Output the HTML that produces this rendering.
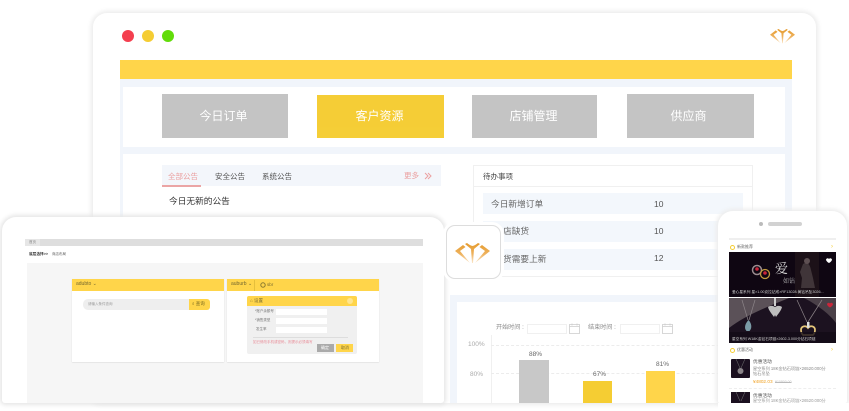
<!DOCTYPE html>
<html lang="zh"><head><meta charset="utf-8"><title>UI</title>
<style>
html,body{margin:0;padding:0;background:#fff}
#p{position:relative;width:849px;height:411px;overflow:hidden;background:#fff;font-family:"Liberation Sans","Noto Sans CJK SC",sans-serif;filter:blur(.3px)}
#p div,#p span.a{position:absolute;box-sizing:border-box}
.t{position:absolute;white-space:nowrap;line-height:1}
.btn{color:#fff;font-size:12px;line-height:44px;text-align:center;opacity:.98}
.row{background:#f3f7fc;left:483px;width:260px;height:21px}
.dot{width:12px;height:12px;border-radius:50%;top:30px}
svg{position:absolute;overflow:visible}
</style></head><body><div id="p">
<svg width="0" height="0"><defs>
<linearGradient id="g" x1="0" y1="0" x2="0" y2="1"><stop offset="0" stop-color="#e59a2c"/><stop offset=".55" stop-color="#eeb25e"/><stop offset="1" stop-color="#fbe6c8"/></linearGradient>
<symbol id="logo" viewBox="0 0 35 21"><path fill="url(#g)" d="M0 8 8 2 10.500 4 5 8 15 20ZM35 8 27 2 24.500 4 30 8 20 20ZM12 0Q15 2.500 17.500 3 20 2.500 23 0L25 1 19 6 18 20H17L16 6 10 1Z"/></symbol>
</defs></svg>

<!-- back window -->
<div style="left:93px;top:13px;width:723px;height:390px;background:#fff;border-radius:14px 14px 6px 6px;box-shadow:0 0 5px 2px #ececec"></div>
<div class="dot" style="left:122px;background:#f43f4f"></div>
<div class="dot" style="left:142px;background:#f5cd33"></div>
<div class="dot" style="left:162px;background:#62dc0a"></div>
<svg style="left:769px;top:29px" width="27" height="15"><use href="#logo" width="27" height="15"/></svg>

<div style="left:120px;top:60px;width:672px;height:19px;background:#ffd54a"></div>
<div style="left:120px;top:79px;width:672px;height:216px;background:#f1f5fb"></div>
<div style="left:123px;top:87px;width:662px;height:60px;background:#fff"></div>
<div style="left:123px;top:154px;width:662px;height:141px;background:#fff"></div>
<div class="btn" style="left:162px;top:94px;width:126px;height:44px;background:#c3c3c3;padding-right:3px">今日订单</div>
<div class="btn" style="left:317px;top:95px;width:127px;height:43px;background:#f5cd33;padding-right:2px;line-height:43px">客户资源</div>
<div class="btn" style="left:472px;top:95px;width:125px;height:43px;background:#c3c3c3;padding-right:2px;line-height:43px">店铺管理</div>
<div class="btn" style="left:627px;top:94px;width:127px;height:44px;background:#c3c3c3;padding-right:4px">供应商</div>

<!-- notices -->
<div style="left:162px;top:165px;width:279px;height:21px;background:#f3f6fb"></div>
<div style="left:162px;top:185px;width:39px;height:2px;background:#eba5a5"></div>
<span class="t" style="left:168px;top:173px;font-size:7.5px;color:#eba0a0">全部公告</span>
<span class="t" style="left:215px;top:173px;font-size:7.5px;color:#555">安全公告</span>
<span class="t" style="left:262px;top:173px;font-size:7.5px;color:#555">系统公告</span>
<span class="t" style="left:404px;top:172px;font-size:7.5px;color:#eba0a0">更多</span>
<svg style="left:424px;top:172px" width="8" height="8" fill="none" stroke="#eba0a0" stroke-width="1"><path d="M1 1 4 4 1 7M4 1 7 4 4 7"/></svg>
<span class="t" style="left:169px;top:197px;font-size:8.7px;color:#333">今日无新的公告</span>

<!-- todo -->
<div style="left:473px;top:165px;width:280px;height:112px;border:1px solid #f0f0f0"></div>
<div style="left:473px;top:186px;width:280px;height:1px;background:#f0f0f0"></div>
<span class="t" style="left:483px;top:173px;font-size:7.5px;color:#444">待办事项</span>
<div class="row" style="top:193px"></div><div class="row" style="top:221px"></div><div class="row" style="top:249px"></div>
<span class="t" style="left:491px;top:200px;font-size:8.7px;color:#666">今日新增订单</span>
<span class="t" style="left:503px;top:227px;font-size:8.7px;color:#666">店缺货</span>
<span class="t" style="left:503px;top:255px;font-size:8.7px;color:#666">货需要上新</span>
<span class="t" style="left:654px;top:200px;font-size:8.500px;color:#555">10</span>
<span class="t" style="left:654px;top:227px;font-size:8.500px;color:#555">10</span>
<span class="t" style="left:654px;top:254px;font-size:8.500px;color:#555">12</span>

<!-- chart -->
<div style="left:450px;top:295px;width:342px;height:108px;background:#f1f5fb"></div>
<div style="left:457px;top:302px;width:328px;height:101px;background:#fff"></div>
<span class="t" style="left:496px;top:325px;font-size:6.100px;color:#888">开始时间 :</span>
<div style="left:527px;top:324px;width:40px;height:10px;border:1px solid #f0f0f0"></div>
<span class="t" style="left:588px;top:325px;font-size:6.100px;color:#888">结束时间 :</span>
<div style="left:620px;top:324px;width:40px;height:10px;border:1px solid #f0f0f0"></div>
<svg style="left:569px;top:323px" width="11" height="11" fill="none" stroke="#ccc" stroke-width=".8"><path d="M.5 1.500h10v9H.5zM.5 3.500h10M3 .5v2M8 .5v2"/></svg>
<svg style="left:662px;top:323px" width="11" height="11" fill="none" stroke="#ccc" stroke-width=".8"><path d="M.5 1.500h10v9H.5zM.5 3.500h10M3 .5v2M8 .5v2"/></svg>
<div style="left:491px;top:335px;width:1px;height:68px;background:#f0f0f0"></div>
<div style="left:491px;top:345px;width:294px;height:0;border-top:1px dashed #ececec"></div>
<div style="left:491px;top:373px;width:294px;height:0;border-top:1px dashed #ececec"></div>
<span class="t" style="left:468px;top:342px;font-size:6.500px;color:#aaa">100%</span>
<span class="t" style="left:470px;top:372px;font-size:6.500px;color:#aaa">80%</span>
<div style="left:519px;top:360px;width:30px;height:43px;background:#c8c8c8"></div>
<div style="left:583px;top:381px;width:29px;height:22px;background:#f5cd33"></div>
<div style="left:646px;top:371px;width:29px;height:32px;background:#ffd54a"></div>
<span class="t" style="left:529px;top:352px;font-size:6.500px;color:#666">88%</span>
<span class="t" style="left:593px;top:372px;font-size:6.500px;color:#666">67%</span>
<span class="t" style="left:656px;top:362px;font-size:6.500px;color:#666">81%</span>

<!-- front window -->
<div style="left:2px;top:217px;width:442px;height:186px;background:#fff;border-radius:14px 14px 3px 3px;box-shadow:0 0 4px 2px #e6e6e6"></div>
<div style="left:25px;top:239px;width:398px;height:7px;background:#dedede"></div>
<div style="left:25px;top:239px;width:15px;height:7px;background:#e6e6e6"></div>
<span class="t" style="left:29px;top:241px;font-size:3.500px;color:#888">首页</span>
<span class="t" style="left:29px;top:253px;font-size:3.700px;color:#333;font-weight:bold">底层选择&gt;&gt;</span>
<span class="t" style="left:52px;top:253px;font-size:3.500px;color:#666">商店布局</span>
<div style="left:27px;top:263px;width:396px;height:140px;background:#f6f6f6"></div>

<div style="left:72px;top:279px;width:152px;height:83px;background:#fff;box-shadow:0 .5px 1px #d8d8d8"></div>
<div style="left:72px;top:279px;width:152px;height:12px;background:#ffd54a"></div>
<span class="t" style="left:76px;top:282px;font-size:5px;color:#776a30">adubto ⌄</span>
<div style="left:83px;top:299px;width:127px;height:11px;background:#eee;border-radius:5px"></div>
<div style="left:189px;top:299px;width:21px;height:11px;background:#ffd54a;border-radius:0 3px 3px 0"></div>
<span class="t" style="left:88px;top:303px;font-size:3.500px;color:#999">请输入条件查询</span>
<span class="t" style="left:192px;top:302px;font-size:4.500px;color:#7a6a20">⌕ 查询</span>

<div style="left:227px;top:279px;width:152px;height:83px;background:#fff;box-shadow:0 .5px 1px #d8d8d8"></div>
<div style="left:227px;top:279px;width:152px;height:12px;background:#ffd54a"></div>
<span class="t" style="left:231px;top:282px;font-size:5px;color:#776a30">auburb ⌄</span>
<svg style="left:260px;top:282px" width="6" height="6"><circle cx="3" cy="3" r="2.200" fill="none" stroke="#8a7a30" stroke-width="1"/></svg>
<span class="t" style="left:267px;top:283px;font-size:4.500px;color:#776a30">sbr</span>
<div style="left:254px;top:280px;width:1px;height:11px;background:#e5bf3c"></div>
<div style="left:247px;top:296px;width:110px;height:58px;background:#f0f0f0;border-radius:2px"></div>
<div style="left:247px;top:296px;width:110px;height:10px;background:#ffd54a;border-radius:2px 2px 0 0"></div>
<span class="t" style="left:250px;top:299px;font-size:4.500px;color:#776a30">⌂ 设置</span>
<div style="left:347px;top:298px;width:6px;height:6px;border-radius:50%;background:#ffe58f"></div>
<span class="t" style="left:255px;top:310px;font-size:3.500px;color:#777">*账户余额号</span>
<span class="t" style="left:255px;top:319px;font-size:3.500px;color:#777">*销售类型</span>
<span class="t" style="left:256px;top:328px;font-size:3.500px;color:#777">发生率</span>
<div style="left:276px;top:309px;width:51px;height:6px;background:#fff"></div>
<div style="left:276px;top:318px;width:51px;height:6px;background:#fff"></div>
<div style="left:276px;top:327px;width:51px;height:6px;background:#fff"></div>
<div style="left:253px;top:337px;width:95px;height:1px;background:#ddd"></div>
<span class="t" style="left:253px;top:341px;font-size:3.500px;color:#e88a96">如已修改手机或密码，则提示必须填写</span>
<div style="left:317px;top:344px;width:17px;height:8px;background:#aaa"></div>
<div style="left:336px;top:344px;width:17px;height:8px;background:#ffd54a"></div>
<span class="t" style="left:321px;top:346px;font-size:4px;color:#fff">确定</span>
<span class="t" style="left:341px;top:346px;font-size:4px;color:#776a30">取消</span>

<!-- app tile -->
<div style="left:446px;top:225px;width:55px;height:54px;background:#fff;border:1px solid #ddd;border-radius:9px;box-shadow:0 0 0 3px #fff"></div>
<svg style="left:455px;top:243px" width="35" height="21"><use href="#logo" width="35" height="21"/></svg>

<!-- phone -->
<div style="left:718px;top:211px;width:129px;height:192px;background:#fff;border-radius:15px 15px 2px 2px;box-shadow:0 0 4px 2px #ececec"></div>
<div style="left:768px;top:222px;width:34px;height:4px;background:#d2d2d2;border-radius:2px"></div>
<div style="left:759px;top:222px;width:4px;height:4px;background:#bbb;border-radius:50%"></div>
<div style="left:729px;top:238px;width:107px;height:2px;background:#efefef"></div>
<div style="left:730px;top:245px;width:5px;height:5px;border-radius:50%;background:#fff;border:1.500px solid #f5cd33"></div>
<span class="t" style="left:737px;top:245px;font-size:4px;color:#666">新款推荐</span>
<span class="t" style="left:831px;top:244px;font-size:6px;color:#f5cd33">›</span>

<svg style="left:729px;top:252px" width="107" height="45" viewBox="0 0 107 45">
<rect width="107" height="45" fill="#0f0612"/><rect x="66" width="24" height="45" fill="#1c1118"/>
<path d="M74 12c4-3 7 0 8 6l2 8 2 10H72l1-10-2-6z" fill="#403539"/><circle cx="78" cy="9" r="3" fill="#5d4f52"/>
<circle cx="28" cy="18" r="4.500" fill="none" stroke="#9b8b8f" stroke-width="1.500"/><circle cx="28" cy="17" r="1.800" fill="#c9263a"/>
<circle cx="36" cy="22" r="4.500" fill="none" stroke="#c29a3d" stroke-width="1.300"/><circle cx="36" cy="21" r="1.800" fill="#c9263a"/>
<text x="46" y="21" font-size="13" fill="#ddd" font-family="Noto Serif CJK SC,serif">爱</text>
<text x="54" y="31" font-size="6" fill="#bbb" font-family="Noto Serif CJK SC,serif">如钻</text>
<path d="M97 7.500c1-1.500 2-1.500 3-.5 1-1 2-1 3 .5 0 1.500-2 3-3 3.500-1-.5-3-2-3-3.500z" fill="#fff"/>
<text x="3" y="41" font-size="3.700" fill="#cfcfcf" font-family="Liberation Sans,Noto Sans CJK SC,sans-serif">爱心星系列 星×1.00克拉钻戒×RF13028.黄钻吊坠3026...</text>
</svg>

<svg style="left:729px;top:298px" width="107" height="45" viewBox="0 0 107 45">
<rect width="107" height="45" fill="#1c1220"/>
<path d="M0 0H60C40 8 15 18 0 30Z" fill="#5b5158"/><path d="M75 0H107V25C100 15 85 5 75 0Z" fill="#4a4048"/>
<path d="M13 2 19 22M26 2 20 22M68 2 78 24M93 2 79 24" stroke="#8c8488" stroke-width=".7" fill="none"/>
<path d="M19.500 22c3 3 4 8 1 11h-3c-3-3-1-8 2-11z" fill="#7a9ba6"/>
<path d="M46 9c-3-2-6-1-7 0 1 4 4 7 6 10l1-2 1 2c2-3 5-6 6-10-1-1-4-2-7 0z" fill="#bdbdbd"/><rect x="45" y="0" width="2" height="8" fill="#ccc"/>
<path d="M72 32c0-4 5-5 7-2 2-3 7-2 7 2 0 3-2 5-2 5H74s-2-2-2-5z" fill="none" stroke="#e6c77a" stroke-width="1.700"/><rect x="78" y="24" width="2.500" height="6" fill="#ddd"/>
<path d="M98 6c1-1.500 2-1.500 3-.5 1-1 2-1 3 .5 0 1.500-2 3-3 3.500-1-.5-3-2-3-3.500z" fill="#c9263a"/>
<rect y="34" width="107" height="11" fill="#130b16" opacity=".8"/>
<text x="3" y="42" font-size="3.700" fill="#cfcfcf" font-family="Liberation Sans,Noto Sans CJK SC,sans-serif">星空系列 W18K金钻石项链×2602-3.000分钻石项链</text>
</svg>

<div style="left:730px;top:348px;width:5px;height:5px;border-radius:50%;background:#fff;border:1.500px solid #f5cd33"></div>
<span class="t" style="left:737px;top:348px;font-size:4px;color:#666">优惠活动</span>
<span class="t" style="left:831px;top:347px;font-size:6px;color:#f5cd33">›</span>

<svg style="left:731px;top:359px" width="19" height="19" viewBox="0 0 19 19"><rect width="19" height="19" fill="#1b1020" rx="1"/><path d="M5 0 9 9M14 0 10 9" stroke="#777" stroke-width=".5"/><circle cx="9.500" cy="12" r="3" fill="#8b8589"/></svg>
<span class="t" style="left:753px;top:360px;font-size:4.700px;color:#555">优惠活动</span>
<span class="t" style="left:753px;top:367px;font-size:4.200px;color:#888">星空系列 18K金钻石项链×26520.000分</span>
<span class="t" style="left:753px;top:372px;font-size:4.200px;color:#888">钻石吊坠</span>
<span class="t" style="left:753px;top:380px;font-size:4.700px;color:#f0a020">¥4802.03</span>
<span class="t" style="left:775px;top:381px;font-size:3.500px;color:#bbb;text-decoration:line-through">¥10800.00</span>
<div style="left:729px;top:388px;width:107px;height:0;border-top:1px dashed #eee"></div>

<svg style="left:731px;top:392px" width="19" height="11" viewBox="0 0 19 11"><rect width="19" height="11" fill="#1b1020"/><path d="M5 0 9 9M14 0 10 9" stroke="#777" stroke-width=".5"/></svg>
<span class="t" style="left:753px;top:394px;font-size:4.700px;color:#555">优惠活动</span>
<span class="t" style="left:753px;top:399px;font-size:4.200px;color:#999">星空系列 18K金钻石项链×26520.000分</span>
<div style="left:718px;top:403px;width:131px;height:8px;background:#fff"></div>
</div></body></html>
